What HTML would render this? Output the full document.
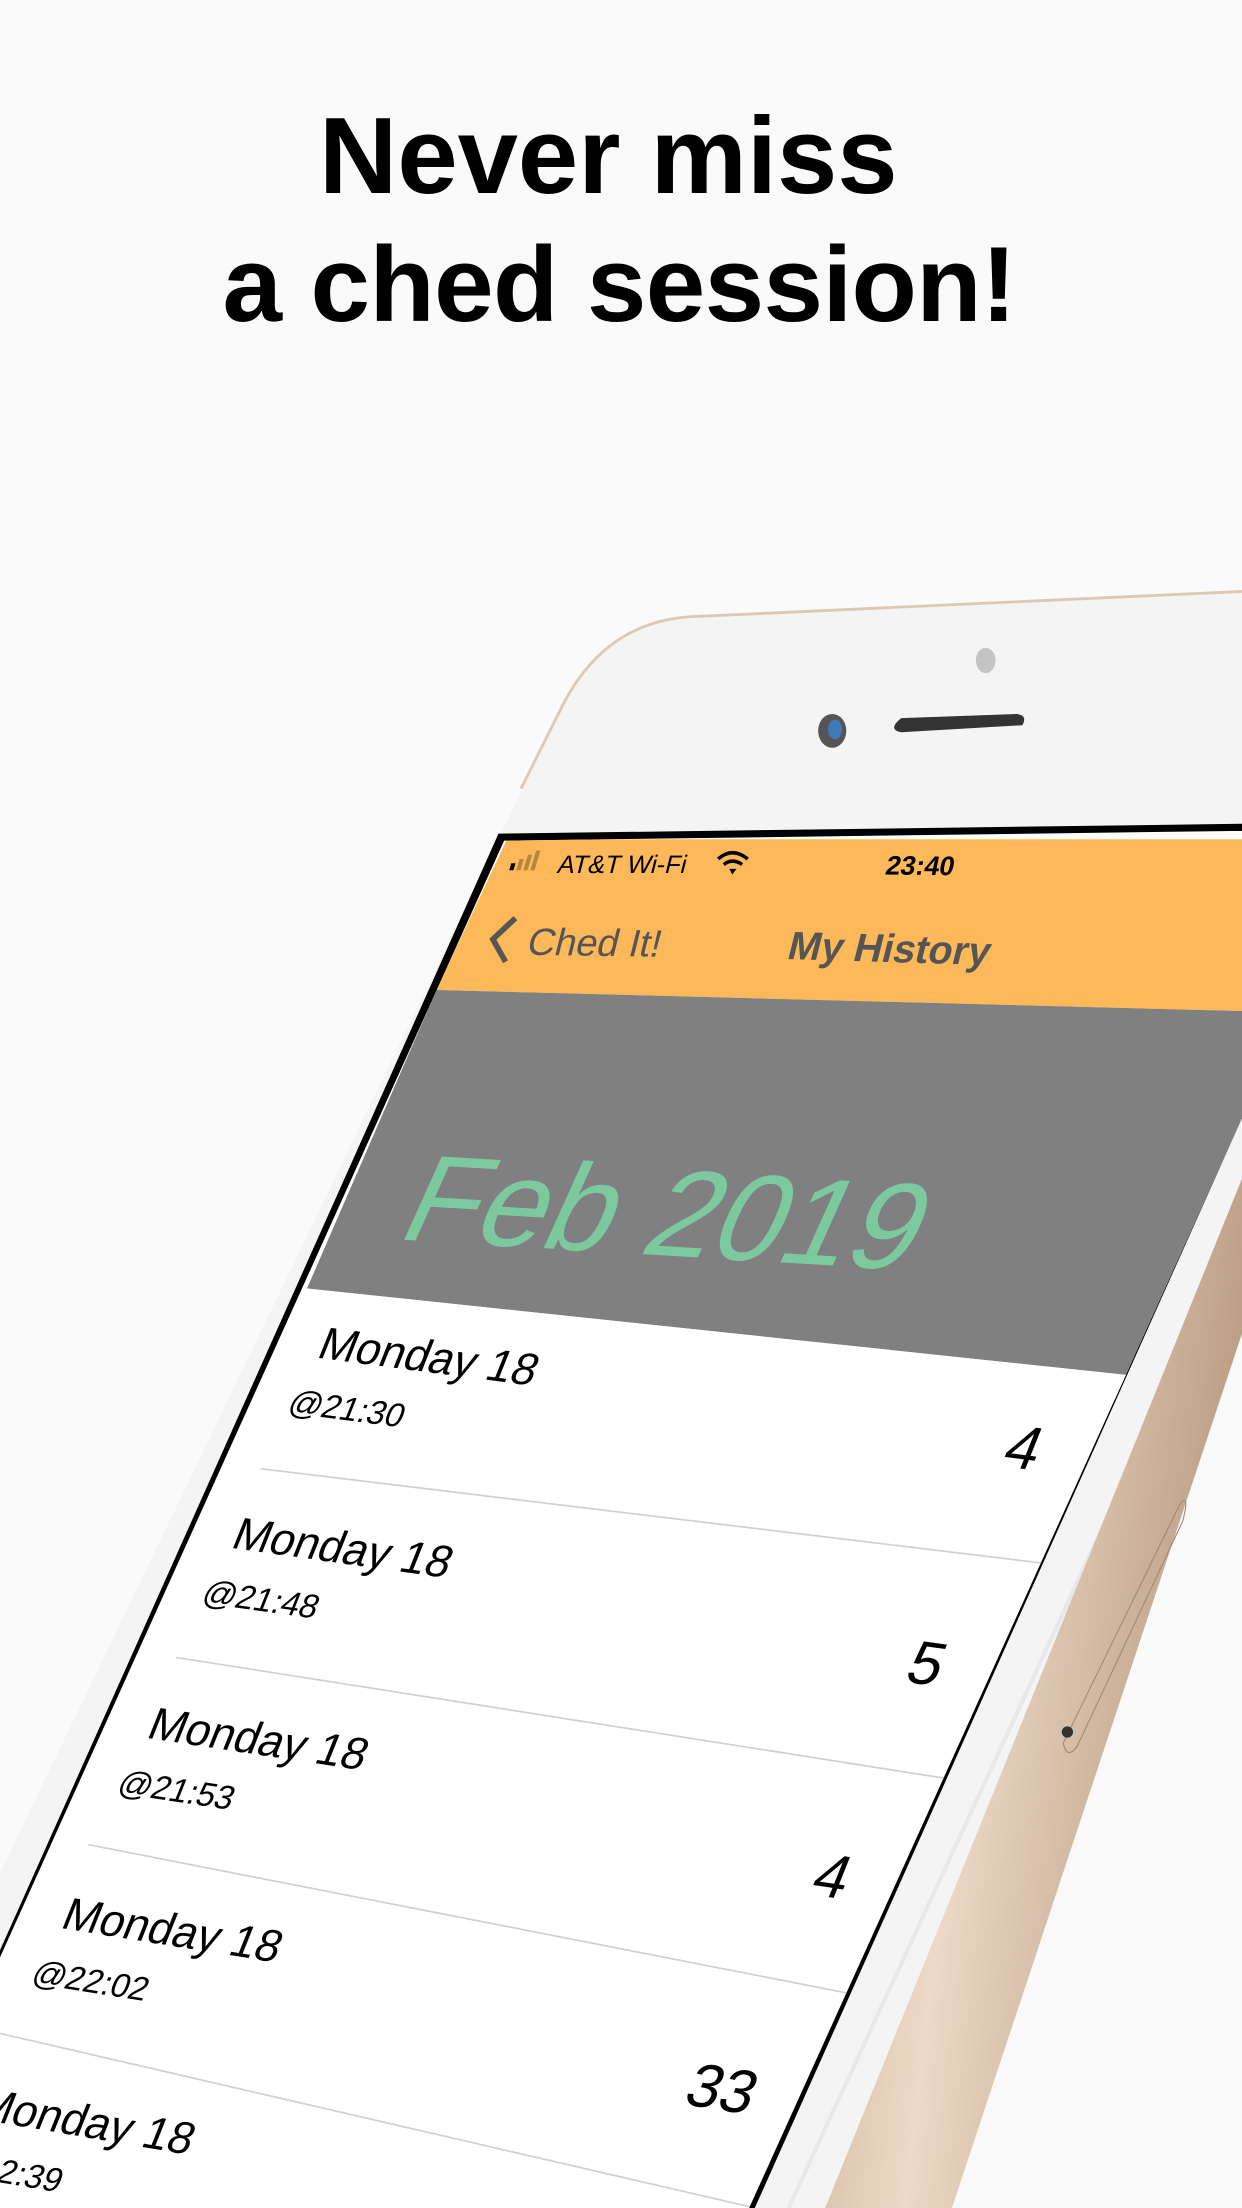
<!DOCTYPE html>
<html><head><meta charset="utf-8"><style>
html,body{margin:0;padding:0;background:#fafafa;}
svg{display:block}
text{font-family:"Liberation Sans",sans-serif;}
</style></head><body>
<svg width="1242" height="2208" viewBox="0 0 882 1568" xmlns="http://www.w3.org/2000/svg">
<defs>
<linearGradient id="gold" x1="0" y1="0" x2="1" y2="0.3">
<stop offset="0" stop-color="#c9ab8f"/><stop offset="0.45" stop-color="#ecd9c6"/><stop offset="1" stop-color="#b99a80"/>
</linearGradient>
<clipPath id="scr"><polygon points="358,597 882,590 882,794 532,1568 0,1568 0,1390"/></clipPath>
</defs>
<rect width="882" height="1568" fill="#fafafa"/>
<text x="432" y="137" font-size="77" font-weight="bold" text-anchor="middle" fill="#000">Never miss</text>
<text x="440" y="228" font-size="76" font-weight="bold" text-anchor="middle" fill="#000" textLength="564">a ched session!</text>
<!-- phone body -->
<path d="M882,420 L490,438 Q430,442 400,500 L0,1330 L0,1568 L676,1568 L882,947 Z" fill="#f4f4f4"/>
<path d="M882,420 L490,438 Q430,442 400,500 L370,560" fill="none" stroke="#dcc8b4" stroke-width="2"/>
<!-- bezel + gold edge -->
<line x1="882" y1="870" x2="560" y2="1568" stroke="#e6e8ea" stroke-width="3"/>
<polygon points="882,837 882,947 676,1568 586,1568" fill="url(#gold)"/>
<path d="M838,1068 Q845,1060 840,1080 L765,1240 Q758,1250 755,1238 Z" fill="none" stroke="#a08a76" stroke-width="0.8"/>
<circle cx="758" cy="1230" r="4" fill="#333"/>
<!-- top sensors -->
<ellipse cx="700" cy="469" rx="7" ry="9" fill="#c4c4c4"/>
<ellipse cx="591" cy="519" rx="10" ry="12" fill="#555"/>
<ellipse cx="593" cy="518" rx="5" ry="7" fill="#3f7ab8"/>
<path d="M640,510 L722,507 Q730,508 726,515 L640,520 Q630,518 640,510 Z" fill="#333"/>
<!-- screen border -->
<polygon points="354,592 882,585 882,794 536,1568 0,1568 0,1385" fill="#000"/>
<g clip-path="url(#scr)">
<rect x="0" y="580" width="882" height="1000" fill="#fff"/>
<polygon points="360,596 882,596 882,718 310,703" fill="#fdb85a"/>
<polygon points="310,703 882,718 882,985 218,915 " fill="#808080"/>
<polygon points="218,915 882,985 882,1000 200,950" fill="#fff"/>
<!-- status bar -->
<g transform="matrix(1,0,-0.3,1,185,0)">
<rect x="362" y="613" width="3" height="5" fill="#000"/>
<rect x="367" y="610" width="3" height="8" fill="#b8863a"/>
<rect x="372" y="607" width="3" height="11" fill="#b8863a"/>
<rect x="377" y="604" width="3" height="14" fill="#b8863a"/>
</g>
<text transform="matrix(1,0,-0.25,1,395,620)" font-size="18" fill="#000">AT&amp;T Wi-Fi</text>
<path d="M510,610 Q520,601 531,610 M514,614 Q520,609 527,614" stroke="#000" stroke-width="2.5" fill="none"/>
<path d="M518,617 L523,617 L520,621 Z" fill="#000"/>
<text transform="matrix(1,0.01,-0.2,1,628,621)" font-size="19" font-weight="bold" fill="#000">23:40</text>
<text transform="matrix(1,0.015,-0.25,1,373,678)" font-size="27" fill="#555">Ched It!</text>
<path d="M366,652 L350,667 L359,683" stroke="#555" stroke-width="4" fill="none"/>
<text transform="matrix(1,0.03,-0.25,1,558,681)" font-size="28" font-weight="bold" fill="#555">My History</text>
<text transform="matrix(1,0.06,-0.45,1,280,880)" font-size="86" fill="#7cc9a0">Feb 2019</text>
<!-- rows -->
<g font-size="31" fill="#000">
<text transform="matrix(1,0.13,-0.4,1,224,964)">Monday 18</text>
<text transform="matrix(1,0.14,-0.4,1,163,1099)">Monday 18</text>
<text transform="matrix(1,0.15,-0.4,1,103,1234)">Monday 18</text>
<text transform="matrix(1,0.16,-0.4,1,42,1369)">Monday 18</text>
<text transform="matrix(1,0.17,-0.4,1,-20,1504)">Monday 18</text>
</g>
<g font-size="23" fill="#000">
<text transform="matrix(1,0.13,-0.4,1,203,1003)">@21:30</text>
<text transform="matrix(1,0.14,-0.4,1,142,1138)">@21:48</text>
<text transform="matrix(1,0.15,-0.4,1,82,1273)">@21:53</text>
<text transform="matrix(1,0.16,-0.4,1,21,1408)">@22:02</text>
<text transform="matrix(1,0.17,-0.4,1,-40,1543)">@22:39</text>
</g>
<g font-size="42" fill="#000">
<text transform="matrix(1,0.13,-0.4,1,710,1041)">4</text>
<text transform="matrix(1,0.14,-0.4,1,641,1194)">5</text>
<text transform="matrix(1,0.15,-0.4,1,574,1345)">4</text>
<text transform="matrix(1,0.16,-0.4,1,484,1494)">33</text>
</g>
<g stroke="#d0d0d0" stroke-width="1.2">
<line x1="185" y1="1043" x2="740" y2="1110"/>
<line x1="125" y1="1177" x2="672" y2="1263"/>
<line x1="63" y1="1310" x2="605" y2="1416"/>
<line x1="0" y1="1444" x2="545" y2="1570"/>
</g>
</g>
</svg>
</body></html>
